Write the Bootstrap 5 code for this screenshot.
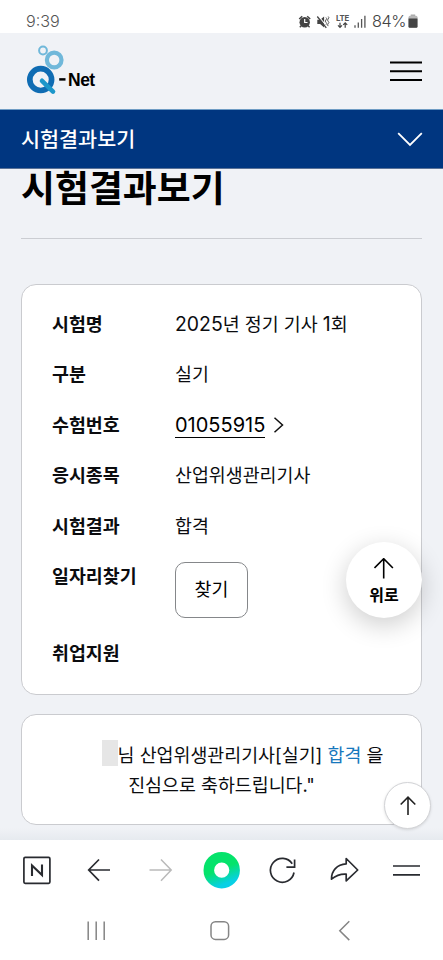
<!DOCTYPE html>
<html lang="ko">
<head>
<meta charset="utf-8">
<meta name="viewport" content="width=device-width, initial-scale=1">
<title>Q-Net 시험결과보기</title>
<link rel="stylesheet" href="https://cdn.jsdelivr.net/npm/bootstrap@5.3.0/dist/css/bootstrap.min.css">
<style>
body{font-family:Inter,"Noto Sans CJK KR",sans-serif;background:#f0f2f6;color:#0b0c0f;height:960px;overflow:hidden}
svg{display:block;flex:none}
.screen{height:960px;width:443px}
.status{height:33px;color:#555;padding:9px 25px 0 26px;font-size:16.2px;line-height:25px;font-family:Inter,sans-serif;font-weight:300}
.status .pct{font-size:16.2px;letter-spacing:-.4px;font-weight:300;width:36px;margin-left:4px;color:#444}
.site-head{height:76px;padding:0 21px 0 26px}
.logo-name{font:700 17.5px/20px "Liberation Sans",sans-serif;color:#000;letter-spacing:-.5px;margin-top:18px}
.menu-bar{height:60px;background:#003680;border-top:1px solid #6f9cc4;border-bottom:1px solid #5a7297;padding:0 20px 0 21px;color:#fff;font-size:20.7px;font-weight:500}
.menu-bar span{padding-top:1px}
.page-title{font-size:36.9px;font-weight:700;line-height:40px;color:#000;margin:0;border-bottom:1px solid #cbcdd2;height:70px}
.content{padding:0 21px;min-height:0}
.panel{background:#fff;border:1px solid #cacbcf;border-radius:15px}
.result{margin-top:44.5px;height:411px;padding:25.5px 30px 24px;gap:21.4px;font-size:18.4px;line-height:29px}
.result dt{width:123px;font-weight:700}
.result dd{margin:0}
.result dl{margin:0}
.digits{font-size:19.4px;line-height:1}
.num{border-bottom:1.5px solid #000;color:#000;line-height:24px;font-size:20px;letter-spacing:0}
.find{height:56px;width:73px;border:1px solid #85878a;border-radius:10px;font-size:18.4px;background:#fff;color:#000;padding:0}
.congrats{margin-top:19.5px;height:111px;padding-top:25px;font-size:18.4px;line-height:30px}
.masked{display:inline-block;width:16px;height:26px;background:#e6e6e6;margin-left:42px;vertical-align:-4px;margin-top:-8px}
.pass{color:#1778bd}
.fab{background:#fff;border-radius:50%}
.top-fab{left:346px;top:542px;width:76px;height:76px;box-shadow:0 7px 26px rgba(0,0,0,.2);font-size:16px;font-weight:600;line-height:22px;color:#000}
.top-fab svg{margin-bottom:4px}
.mini-fab{left:384px;top:782px;width:47px;height:47px;border:1px solid #d2d3d6;box-shadow:0 1px 3px rgba(0,0,0,.12)}
.fade-edge{left:0;top:828px;width:443px;height:12px;background:linear-gradient(#f0f2f6,#e6eaef)}
.tools{height:120px;background:#fff}
</style>
<script src="https://cdn.jsdelivr.net/npm/bootstrap@5.3.0/dist/js/bootstrap.bundle.min.js"></script>
</head>
<body>
<div class="screen d-flex flex-column position-relative overflow-hidden">
  <div class="status bg-white d-flex justify-content-between flex-shrink-0">
    <span>9:39</span>
    <div class="d-flex">
      <svg width="70" height="16" viewBox="298 13 70 16" class="mt-1">
        <g fill="#444"><circle cx="304.700" cy="22.200" r="5.200"/><path d="M298.700 18.500l3-2.700 1 1-3 2.700zM310.700 18.500l-3-2.700-1 1 3 2.700zM301 25l1 1-1.700 1.800-1-1zM308.400 25l-1 1 1.700 1.800 1-1z"/>
        <path d="M317.300 19.800h2.800l4-3.300v11l-4-3.500h-2.800z"/></g>
        <path d="M304.700 19v3.500h2.800" stroke="#fff" stroke-width="1.200" fill="none"/>
        <path d="M318 15.500l8.500 10.700" stroke="#fff" stroke-width="1.200"/><path d="M317.300 16.500l9 11.300" stroke="#444" stroke-width="1.300"/>
        <path d="M326 17.500q1.400 1.200 0 2.400t0 2.400 0 2.400M328.200 16.500q1.400 1.200 0 2.400t0 2.400 0 2.400 0 2.400" stroke="#555" stroke-width="1" fill="none"/>
        <text x="335.900" y="21" font-family="Inter" font-size="7.800" font-weight="700" fill="#555" textLength="13.300">LTE</text>
        <path d="M340 22.700v4.500M338 25.300l2 2 2-2M345.200 27.700v-4.500M343.200 24.800l2-2 2 2" stroke="#444" stroke-width="1.200" fill="none"/>
        <path d="M355 25.300v2.400M358.300 22.500v5.200M361.600 19v8.700M364.900 15.700v12" stroke="#555" stroke-width="1.300"/>
      </svg>
      <span class="pct">84%</span>
      <svg width="10" height="15" viewBox="0 0 10 15" class="mt-1"><g transform="translate(0 1.500)"><rect x="2.700" width="4.500" height="3" fill="#aaa"/><rect x=".5" y="1.300" width="9" height="12" rx="1.500" fill="#b7b7b7"/><path d="M.5 4h9v8q0 1.200-1.200 1.200H1.700Q.5 13.200.5 12z" fill="#444"/></g></svg>
    </div>
  </div>

  <header class="site-head d-flex align-items-center justify-content-between flex-shrink-0">
    <div class="d-flex align-items-center">
      <svg width="42" height="52" viewBox="26 45 42 52">
        <circle cx="43" cy="50.500" r="3.900" fill="none" stroke="#70b8da" stroke-width="2"/>
        <circle cx="54.200" cy="60" r="7.300" fill="none" stroke="#70b8da" stroke-width="4.200"/>
        <circle cx="40.700" cy="79.600" r="10.900" fill="none" stroke="#0f6cb3" stroke-width="5.700"/>
        <path d="M42 80.800l11 10.800" stroke="#1c97ca" stroke-width="4.600" stroke-linecap="round"/>
        <path d="M59.200 79.400h6.300" stroke="#000" stroke-width="2.500"/>
      </svg>
      <span class="logo-name">Net</span>
    </div>
    <svg width="32" height="20" viewBox="0 0 32 20"><path d="M0 1.500h32M0 10.200h32M0 19h32" stroke="#000" stroke-width="2"/></svg>
  </header>

  <nav class="menu-bar d-flex align-items-center justify-content-between flex-shrink-0">
    <span>시험결과보기</span>
    <svg width="26" height="15" viewBox="0 0 26 15"><path d="M1.200 1.200L13 13 24.800 1.200" stroke="#fff" stroke-width="1.800" fill="none"/></svg>
  </nav>

  <main class="content flex-grow-1 overflow-hidden">
    <h1 class="page-title">시험결과보기</h1>
    <section class="panel result d-flex flex-column">
      <dl class="d-flex"><dt>시험명</dt><dd><span class="digits">2025</span>년 정기 기사 <span class="digits">1</span>회</dd></dl>
      <dl class="d-flex"><dt>구분</dt><dd>실기</dd></dl>
      <dl class="d-flex"><dt>수험번호</dt><dd class="d-flex align-items-center"><a class="num text-decoration-none" href="#">01055915</a><svg class="ms-2" width="11" height="16" viewBox="0 0 11 16"><path d="M1.500.8L9.500 8l-8 7.200" stroke="#111" stroke-width="1.500" fill="none"/></svg></dd></dl>
      <dl class="d-flex"><dt>응시종목</dt><dd>산업위생관리기사</dd></dl>
      <dl class="d-flex"><dt>시험결과</dt><dd>합격</dd></dl>
      <dl class="d-flex"><dt>일자리찾기</dt><dd><button class="btn find d-block">찾기</button></dd></dl>
      <dl class="d-flex"><dt>취업지원</dt><dd></dd></dl>
    </section>
    <section class="panel congrats text-center">
      <div><span class="masked"></span>님 산업위생관리기사[실기] <span class="pass">합격</span> 을</div>
      <div>진심으로 축하드립니다."</div>
    </section>
  </main>

  <footer class="tools flex-shrink-0">
    <svg width="443" height="120" viewBox="0 840 443 120" fill="none">
      <defs><linearGradient id="home" x1=".3" y1="0" x2=".7" y2="1"><stop offset=".45" stop-color="#05e36b"/><stop offset="1" stop-color="#08d0e5"/></linearGradient></defs>
      <g stroke="#292b30" stroke-width="1.700">
        <rect x="23.900" y="857.400" width="26" height="26" rx="1.300"/>
        <path d="M32 876v-10.500l10 9.600v-10.500" stroke-width="2.100"/>
        <path d="M110 870H89M99 859.500L88.700 870 99 880.700"/>
        <path d="M294 872.500a11.900 11.900 0 1 1-1.800-8.800M294.600 859.500v7.700h-8.200"/>
        <path d="M346.200 858.500l11.500 11.500-11.500 10.800v-6.600c-7-.5-10.800 1.800-14.700 5-.2-8.500 5.500-14.800 14.700-15.300z" stroke-linejoin="round"/>
        <path d="M393 866h27M393 874.800h27"/>
      </g>
      <path d="M149.500 870h21M161 859.500L171.200 870 161 880.700" stroke="#bababa" stroke-width="1.500"/>
      <circle cx="221.700" cy="870.200" r="12.900" stroke="url(#home)" stroke-width="10.600"/>
      <g stroke="#858585" stroke-width="1.500"><path d="M88.200 921.500v18.500M96.200 921.500v18.500M104.200 921.500v18.500"/><rect x="211" y="921.800" width="17.600" height="17.600" rx="4.500"/><path d="M349.300 921.300l-9.500 9.400 9.500 9.400"/></g>
    </svg>
  </footer>

  <div class="fade-edge position-absolute"></div>
  <a class="fab top-fab position-absolute d-flex flex-column align-items-center text-decoration-none" href="#">
    <svg class="mt-3" width="20" height="22" viewBox="0 0 20 22"><path d="M10 21V1.500M.8 10.500L10 1.200l9.200 9.300" transform="translate(-.3 -.5)" stroke="#000" stroke-width="1.600" fill="none"/></svg>
    <span>위로</span>
  </a>
  <a class="fab mini-fab position-absolute d-flex align-items-center justify-content-center" href="#">
    <svg width="16" height="20" viewBox="0 0 16 20"><path d="M8 19V1.500M.7 8.500L8 1.200l7.300 7.300" stroke="#222" stroke-width="1.600" fill="none"/></svg>
  </a>
</div>
</body>
</html>
